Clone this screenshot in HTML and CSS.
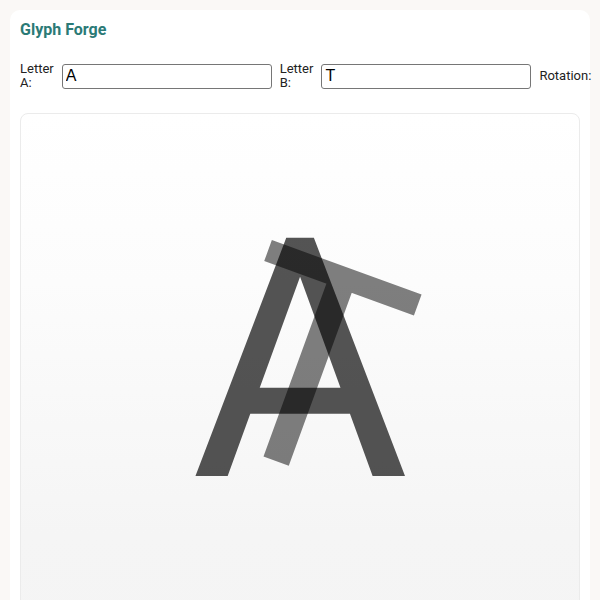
FILE: index.html
```html
<!DOCTYPE html>
<html lang="en">
<head>
<meta charset="utf-8">
<title>Glyph Forge</title>
<link rel="stylesheet" href="styles.css">
</head>
<body>
<main class="card">
  <h1 class="title">Glyph Forge</h1>
  <div class="controls">
    <label class="lbl" for="la">Letter A:</label>
    <input class="txt" id="la" type="text" value="A">
    <label class="lbl" for="lb">Letter B:</label>
    <input class="txt" id="lb" type="text" value="T">
    <label class="lbl" for="rot">Rotation:</label>
    <input class="range" id="rot" type="range" min="0" max="360" value="20">
  </div>
  <div class="stage">
    <svg class="glyphs" viewBox="0 0 558 560" width="558" height="560">
      <text class="ga" x="279" y="362" text-anchor="middle">A</text>
      <text class="gb" text-anchor="middle" transform="translate(255 347) rotate(20)">T</text>
    </svg>
  </div>
</main>
</body>
</html>
```
FILE: styles.css
```css
html, body {
  margin: 0;
  padding: 0;
}
body {
  background: #faf8f6;
  font-family: Roboto, "Liberation Sans", sans-serif;
  color: #222;
  overflow: hidden;
  height: 600px;
}
.card {
  margin: 10px;
  width: 580px;
  box-sizing: border-box;
  background: #fff;
  border-radius: 10px;
  padding: 10px;
  min-height: 700px;
}
.title {
  margin: 0;
  font-size: 16px;
  line-height: 20px;
  font-weight: 700;
  color: #2b7a76;
}
.controls {
  display: flex;
  align-items: center;
  gap: 8px;
  margin-top: 22px;
  height: 28px;
}
.lbl {
  font-size: 13px;
  line-height: 14px;
  flex-shrink: 1;
  min-width: min-content;
  color: #222;
}
.txt {
  flex-shrink: 0;
  width: 210px;
  height: 25px;
  box-sizing: border-box;
  margin: 0;
  border: 1px solid #767676;
  border-radius: 3px;
  padding: 1px 3px;
  font-family: "Liberation Sans", Arial, sans-serif;
  font-size: 16px;
  color: #000;
  background: #fff;
}
.range {
  flex-shrink: 0;
  width: 120px;
  margin: 0;
}
.stage {
  margin-top: 23px;
  height: 560px;
  border: 1px solid #ebebeb;
  border-radius: 8px;
  background: linear-gradient(#ffffff 0%, #fcfcfc 30%, #f5f5f5 75%, #f4f4f4 100%);
  overflow: hidden;
}
.glyphs {
  display: block;
}
.ga {
  font-family: Roboto, sans-serif;
  font-size: 335px;
  fill: rgba(0, 0, 0, 0.67);
}
.gb {
  font-family: Roboto, sans-serif;
  font-size: 290px;
  fill: rgba(0, 0, 0, 0.5);
}
```
